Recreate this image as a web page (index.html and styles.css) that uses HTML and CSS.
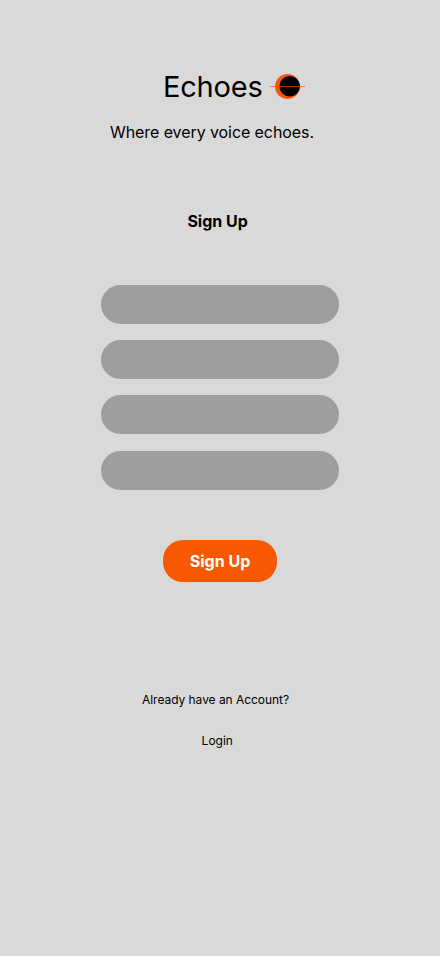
FILE: index.html
```html
<!DOCTYPE html>
<html lang="en">
<head>
<meta charset="utf-8">
<title>Echoes</title>
<link rel="stylesheet" href="styles.css">
</head>
<body>
<main class="screen">
  <header class="brand">
    <h1 class="brand-name">Echoes</h1>
    <svg class="brand-logo" width="35" height="27" viewBox="0 0 35 27" aria-hidden="true">
      <circle cx="17.5" cy="13.5" r="12.5" fill="#f75800"/>
      <circle cx="19.7" cy="13.3" r="10.3" fill="#000"/>
      <path d="M0 13.5H35" stroke="#f75800" stroke-width="0.7"/>
    </svg>
  </header>
  <p class="tagline">Where every voice echoes.</p>
  <h2 class="title">Sign Up</h2>
  <form class="form">
    <input class="field" type="text">
    <input class="field" type="email">
    <input class="field" type="password">
    <input class="field" type="password">
    <button class="submit" type="button">Sign Up</button>
  </form>
  <p class="prompt">Already have an Account?</p>
  <a class="login">Login</a>
</main>
</body>
</html>
```
FILE: styles.css
```css
* { box-sizing: border-box; }
body { margin: 0; background: #d9d9d9; color: #000; font-family: Inter, sans-serif; }
.screen { width: 440px; height: 956px; display: flex; flex-direction: column; align-items: flex-start; padding-top: 68px; }
.brand { display: flex; align-items: center; height: 37px; margin-left: 163px; }
.brand-name { margin: 0; width: 107px; font-size: 29px; line-height: 36px; font-weight: 400; letter-spacing: -0.2px; }
.brand-logo { display: block; flex: none; }
.tagline { margin: 17px 0 0 110px; font-size: 16px; line-height: 20px; letter-spacing: -0.08px; }
.title { margin: 69px 0 0 187.4px; font-size: 16px; line-height: 20px; font-weight: 700; }
.form { width: 238px; margin: 53.8px 0 0 101px; display: flex; flex-direction: column; align-items: center; gap: 16.33px; }
.field { width: 100%; height: 39px; border: 0; border-radius: 20px; background: #9e9e9e; padding: 0 18px; font: inherit; }
.submit { width: 114px; height: 42px; margin-top: 33.9px; border: 0; border-radius: 20px; padding: 0; background: #f75800; color: #fff; font: 700 16px/20px Inter, sans-serif; }
.prompt { margin: 110px 0 0 142px; font-size: 12px; line-height: 16px; letter-spacing: -0.04px; }
.login { margin: 25.4px 0 0 201.6px; font-size: 12px; line-height: 16px; }
```
